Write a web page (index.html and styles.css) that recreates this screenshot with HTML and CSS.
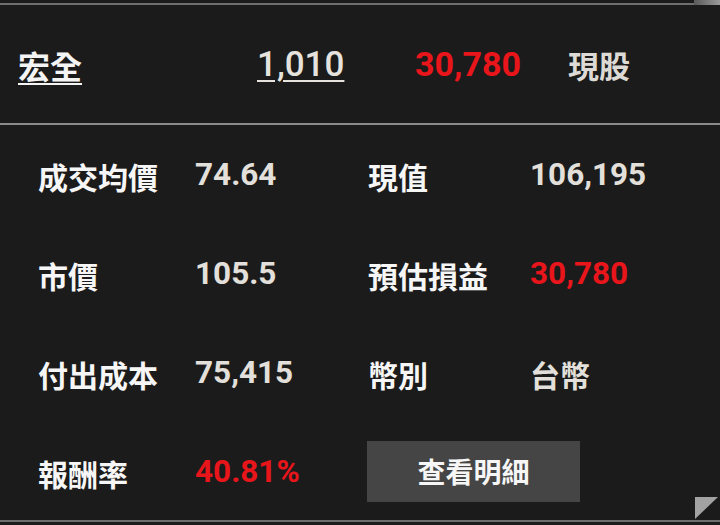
FILE: index.html
```html
<!DOCTYPE html>
<html lang="zh-Hant">
<head>
<meta charset="utf-8">
<link rel="stylesheet" href="styles.css">
</head>
<body>
<div class="panel">
  <div class="topline"></div>
  <div class="topcorner"></div>
  <div class="header">
    <span class="name">宏全</span>
    <span class="qty">1,010</span>
    <span class="pl red">30,780</span>
    <span class="kind">現股</span>
  </div>
  <div class="sep"></div>
  <div class="grid">
    <span class="label">成交均價</span><span class="value">74.64</span>
    <span class="label">現值</span><span class="value">106,195</span>
    <span class="label">市價</span><span class="value">105.5</span>
    <span class="label">預估損益</span><span class="value red">30,780</span>
    <span class="label">付出成本</span><span class="value">75,415</span>
    <span class="label">幣別</span><span class="value cjk">台幣</span>
    <span class="label">報酬率</span><span class="value red">40.81%</span>
    <span class="btncell"><span class="btn">查看明細</span></span>
  </div>
  <div class="bottomline"></div>
  <div class="corner"></div>
</div>
</body>
</html>
```

FILE: styles.css
```css
html, body {
  margin: 0;
  padding: 0;
  background: #1b1b1b;
}
.panel {
  position: relative;
  width: 720px;
  height: 525px;
  background: #1b1b1b;
  overflow: hidden;
  font-family: "Noto Sans CJK TC", "Noto Sans", sans-serif;
}
.topline {
  margin-top: 3px;
  height: 2px;
  background: #6e6e6e;
}
.topcorner {
  position: absolute;
  right: 0;
  top: 0;
  width: 26px;
  height: 5px;
  background: linear-gradient(90deg, #5a5a5a, #9a9a9a);
}
.header {
  height: 118px;
  display: grid;
  grid-template-columns: 239px 158px 153px 1fr;
  align-items: center;
  padding-left: 18px;
  box-sizing: border-box;
}
.name {
  font-size: 32px;
  font-weight: 700;
  color: #f4f4f4;
  text-decoration: underline;
  text-decoration-thickness: 2px;
  text-underline-offset: 4px;
  justify-self: start;
  line-height: 1;
  margin-top: 2px;
}
.qty, .pl {
  font-family: Roboto, "Liberation Sans", sans-serif;
  font-size: 35px;
  line-height: 1;
  color: #e6e3de;
}
.qty {
  font-weight: 500;
  text-decoration: underline;
  text-decoration-thickness: 2px;
  text-underline-offset: 4px;
  justify-self: start;
}
.pl {
  font-weight: 700;
  font-size: 34px;
}
.kind {
  font-size: 31px;
  font-weight: 700;
  color: #dddad6;
  line-height: 1;
}
.red {
  color: #e8151b !important;
}
.sep {
  height: 2px;
  background: #8a8a8a;
}
.grid {
  display: grid;
  grid-template-columns: 157px 173px 162px 1fr;
  grid-auto-rows: 99px;
  padding-left: 38px;
  align-items: center;
}
.label {
  font-size: 30px;
  font-weight: 700;
  color: #f6f6f6;
  line-height: 1;
  margin-top: 2px;
}
.value {
  font-family: Roboto, "Liberation Sans", sans-serif;
  font-size: 31.5px;
  font-weight: 700;
  color: #e3e0db;
  line-height: 1;
}
.value.cjk {
  font-family: "Noto Sans CJK TC", sans-serif;
  font-size: 30px;
  margin-top: 2px;
}
.btncell {
  grid-column: 3 / 5;
  display: flex;
  align-items: center;
  margin-left: -1px;
}
.btn {
  width: 213px;
  height: 61px;
  background: #454545;
  color: #f6f6f6;
  font-size: 28px;
  font-weight: 700;
  display: flex;
  align-items: center;
  justify-content: center;
  margin-top: -1px;
}
.bottomline {
  position: absolute;
  left: 0;
  right: 0;
  top: 520px;
  height: 2px;
  background: #6e6e6e;
}
.corner {
  position: absolute;
  left: 695px;
  top: 497px;
  width: 23px;
  height: 22px;
  background: #a2a2a2;
  clip-path: polygon(0 0, 100% 0, 0 100%);
}
```
